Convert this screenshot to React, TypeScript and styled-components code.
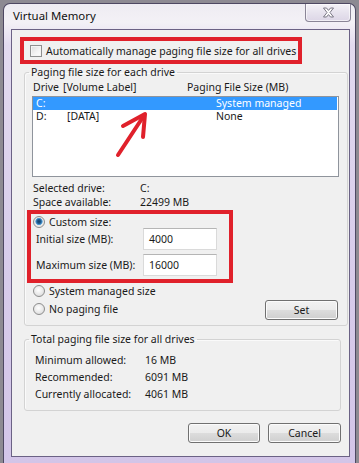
import React from 'react'
import styled, { createGlobalStyle } from 'styled-components'

const GlobalStyle = createGlobalStyle`
  html, body {
    margin: 0;
    padding: 0;
    background: #8d8a92;
  }
  body {
    font-family: 'Segoe UI', 'Noto Sans', 'Liberation Sans', sans-serif;
    color: #1a1a1a;
  }
`

const Window = styled.div`
  box-sizing: border-box;
  width: 353px;
  height: 460px;
  margin: 3px 3px 0 3px;
  display: flex;
  flex-direction: column;
  border: 1px solid #4e4862;
  border-bottom: 0;
  border-radius: 7px 7px 0 0;
  background: linear-gradient(180deg, #eeecf2 0%, #f3f1f6 4%, #e2daef 9%, #d7cbea 60%, #d3c5e8 100%);
`

const TitleBar = styled.div`
  height: 25px;
  display: flex;
  justify-content: space-between;
  align-items: flex-start;
  padding-left: 9px;
`

const Title = styled.span`
  margin-top: 5px;
  font-size: 11.4px;
  line-height: 14px;
  color: #111;
`

const CloseButton = styled.div`
  box-sizing: border-box;
  width: 46px;
  height: 18px;
  margin-right: 4px;
  display: flex;
  align-items: center;
  justify-content: center;
  border: 1px solid #8a8597;
  border-top: 0;
  border-radius: 0 0 4px 4px;
  background: linear-gradient(180deg, #f4f2f7 0%, #e7e3ee 50%, #dcd6e6 100%);
  box-shadow: inset 0 0 0 1px rgba(255, 255, 255, 0.6);
`

const Body = styled.div`
  flex: 1;
  margin: 0 5px 6px 7px;
  display: flex;
  flex-direction: column;
  border: 1px solid #6b6285;
  background: #f0f0f0;
  font-size: 10.5px;
  line-height: 14px;
  padding: 0 0 0 8px;
`

const AnnotationBox = styled.div<{ w: number; h: number }>`
  box-sizing: border-box;
  width: ${(p) => p.w}px;
  height: ${(p) => p.h}px;
  border: 4px solid #e0212b;
`

const TopCheckRow = styled(AnnotationBox)`
  margin-top: 7px;
  display: flex;
  align-items: center;
  gap: 4px;
  padding-left: 6px;
`

const CheckBox = styled.span`
  box-sizing: border-box;
  width: 12px;
  height: 12px;
  border: 1px solid #8e8f8f;
  background: linear-gradient(135deg, #dcdcdc 0%, #f4f4f4 60%, #fdfdfd 100%);
  box-shadow: inset 0 0 0 1px #f4f4f4;
`

const GroupBox = styled.fieldset<{ mt: number }>`
  box-sizing: border-box;
  width: 317px;
  margin: ${(p) => p.mt}px 0 0 4px;
  padding: 0 8px 0 8px;
  border: 1px solid #d3d3d3;
  border-radius: 3px;
  box-shadow: inset 1px 1px 0 #fafafa;
`

const Legend = styled.legend`
  padding: 0 2px;
  margin-left: -4px;
  line-height: 14px;
`

const HeaderRow = styled.div`
  display: flex;
  margin-top: 1px;
`

const Col = styled.span<{ w?: number }>`
  width: ${(p) => (p.w ? `${p.w}px` : 'auto')};
  flex: ${(p) => (p.w ? 'none' : '1')};
  white-space: nowrap;
`

const ListBox = styled.div`
  position: relative;
  box-sizing: border-box;
  width: 307px;
  height: 81px;
  margin: 2px 0 0 -1px;
  border: 1px solid #8f949c;
  background: #fff;
`

const ListRow = styled.div<{ selected?: boolean }>`
  display: flex;
  height: 13px;
  line-height: 13px;
  padding-left: 3px;
  background: ${(p) => (p.selected ? '#3399ff' : 'transparent')};
  color: ${(p) => (p.selected ? '#fff' : '#1a1a1a')};
  margin-right: 1px;
`

const Arrow = styled.svg`
  position: absolute;
  left: 0;
  top: 0;
  pointer-events: none;
`

const InfoGrid = styled.div`
  display: grid;
  grid-template-columns: 107px auto;
  margin-top: 4px;
`

const CustomBox = styled(AnnotationBox)`
  margin: 1px 0 0 -6px;
  display: flex;
  flex-direction: column;
  padding: 1px 0 0 2px;
`

const RadioRow = styled.div<{ h: number }>`
  display: flex;
  align-items: center;
  gap: 4px;
  height: ${(p) => p.h}px;
`

const Radio = styled.span<{ checked?: boolean }>`
  box-sizing: border-box;
  width: 12px;
  height: 12px;
  border-radius: 50%;
  border: 1px solid #8d8d8d;
  background: ${(p) =>
    p.checked
      ? 'radial-gradient(circle at 50% 45%, #0f3f6a 0%, #1f5f94 28%, #5aa5dd 45%, #e6e6e6 52%, #f5f5f5 100%)'
      : 'radial-gradient(circle at 45% 40%, #ffffff 0%, #e8e8e8 55%, #cfcfcf 100%)'};
`

const SizeRow = styled.div<{ mt: number }>`
  box-sizing: border-box;
  display: flex;
  align-items: center;
  justify-content: space-between;
  width: 184px;
  height: 22px;
  margin-top: ${(p) => p.mt}px;
  padding-left: 3px;
`

const TextInput = styled.div`
  box-sizing: border-box;
  width: 74px;
  height: 22px;
  padding: 3px 0 0 5px;
  background: #fff;
  border: 1px solid #dadada;
  border-top-color: #b5b5b5;
`

const BottomRow = styled.div`
  display: flex;
  justify-content: space-between;
  align-items: flex-end;
  padding: 0 1px 5px 0;
`

const RadioColumn = styled.div`
  display: flex;
  flex-direction: column;
  gap: 2px;
  padding-bottom: 3px;
`

const PushButton = styled.button<{ w: number }>`
  box-sizing: border-box;
  width: ${(p) => p.w}px;
  height: 20px;
  padding: 0;
  font: inherit;
  color: #1a1a1a;
  border: 1px solid #707070;
  border-radius: 3px;
  background: linear-gradient(180deg, #f2f2f2 0%, #ebebeb 49%, #dddddd 50%, #cfcfcf 100%);
  box-shadow: inset 0 0 0 1px #fbfbfb;
`

const TotalsGrid = styled.div`
  display: grid;
  grid-template-columns: 110px auto;
  grid-auto-rows: 17px;
  align-items: center;
  padding: 5px 0 8px 2px;
`

const ButtonBar = styled.div`
  display: flex;
  justify-content: flex-end;
  gap: 8px;
  margin: 12px 8px 0 0;
`

const drives = [
  { letter: 'C:', label: '', size: 'System managed', selected: true },
  { letter: 'D:', label: '[DATA]', size: 'None', selected: false },
]

const totals = [
  ['Minimum allowed:', '16 MB'],
  ['Recommended:', '6091 MB'],
  ['Currently allocated:', '4061 MB'],
]

export default function App() {
  return (
    <>
      <GlobalStyle />
      <Window>
        <TitleBar>
          <Title>Virtual Memory</Title>
          <CloseButton>
            <svg width="13" height="11" viewBox="0 0 13 11">
              <path
                d="M1.5 1 H4.5 L6.5 3.4 L8.5 1 H11.5 L8 5.5 L11.5 10 H8.5 L6.5 7.6 L4.5 10 H1.5 L5 5.5 Z"
                fill="#fdfdfd"
                stroke="#6d6a78"
                strokeWidth="0.9"
                strokeLinejoin="round"
              />
            </svg>
          </CloseButton>
        </TitleBar>
        <Body>
          <TopCheckRow w={282} h={27}>
            <CheckBox />
            <span>Automatically manage paging file size for all drives</span>
          </TopCheckRow>

          <GroupBox mt={1}>
            <Legend>Paging file size for each drive</Legend>
            <HeaderRow>
              <Col w={30}>Drive</Col>
              <Col w={124}>[Volume Label]</Col>
              <Col>Paging File Size (MB)</Col>
            </HeaderRow>
            <ListBox>
              {drives.map((d) => (
                <ListRow key={d.letter} selected={d.selected}>
                  <Col w={31}>{d.letter}</Col>
                  <Col w={149}>{d.label}</Col>
                  <Col>{d.size}</Col>
                </ListRow>
              ))}
              <Arrow width="307" height="81" viewBox="0 0 307 81">
                <g stroke="#e0212b" strokeWidth="4" strokeLinecap="round" strokeLinejoin="round" fill="none">
                  <path d="M110 20 L85 58" />
                  <path d="M90 29 L112 17 L110 40" />
                </g>
              </Arrow>
            </ListBox>
            <InfoGrid>
              <span>Selected drive:</span>
              <span>C:</span>
              <span>Space available:</span>
              <span>22499 MB</span>
            </InfoGrid>
            <CustomBox w={206} h={73}>
              <RadioRow h={13}>
                <Radio checked />
                <span>Custom size:</span>
              </RadioRow>
              <SizeRow mt={0}>
                <span>Initial size (MB):</span>
                <TextInput>4000</TextInput>
              </SizeRow>
              <SizeRow mt={4}>
                <span>Maximum size (MB):</span>
                <TextInput>16000</TextInput>
              </SizeRow>
            </CustomBox>
            <BottomRow>
              <RadioColumn>
                <RadioRow h={16}>
                  <Radio />
                  <span>System managed size</span>
                </RadioRow>
                <RadioRow h={16}>
                  <Radio />
                  <span>No paging file</span>
                </RadioRow>
              </RadioColumn>
              <PushButton w={73}>Set</PushButton>
            </BottomRow>
          </GroupBox>

          <GroupBox mt={6}>
            <Legend>Total paging file size for all drives</Legend>
            <TotalsGrid>
              {totals.map(([label, value]) => (
                <React.Fragment key={label}>
                  <span>{label}</span>
                  <span>{value}</span>
                </React.Fragment>
              ))}
            </TotalsGrid>
          </GroupBox>

          <ButtonBar>
            <PushButton w={72}>OK</PushButton>
            <PushButton w={73}>Cancel</PushButton>
          </ButtonBar>
        </Body>
      </Window>
    </>
  )
}
